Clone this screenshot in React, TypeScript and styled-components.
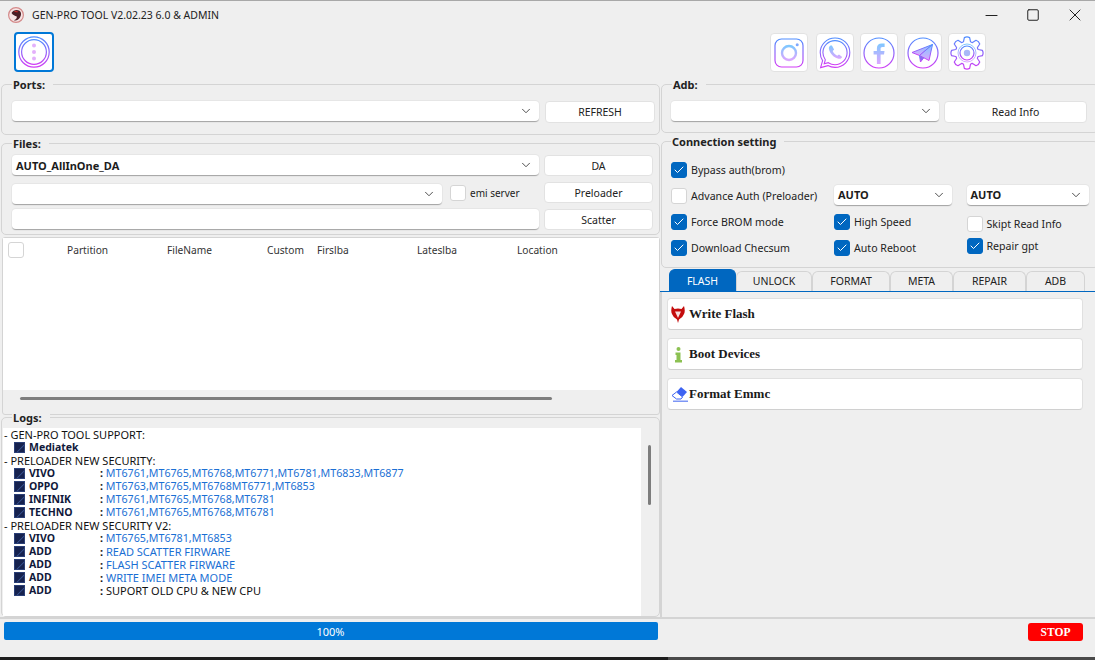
import React from 'react';
import styled, { createGlobalStyle } from 'styled-components';
import { ChevronDown, Check, Minus, Square, X } from 'lucide-react';

const GlobalStyle = createGlobalStyle`
  html, body {
    margin: 0;
    padding: 0;
    background: #efefef;
  }
  * {
    box-sizing: border-box;
  }
`;

const UI_FONT = `"Noto Sans", "Open Sans", sans-serif`;
const SERIF_FONT = `"Liberation Serif", "DejaVu Serif", serif`;

// every drawn icon shares the blue to purple stroke of the original set
const IconGradient = ({ id, light }: { id: string; light?: boolean }) => (
  <defs>
    <linearGradient id={id} x1="0" y1="0" x2="0" y2="1">
      <stop offset="0" stopColor={light ? '#7fc8ff' : '#4d8dff'} />
      <stop offset="1" stopColor={light ? '#dca6ff' : '#d13cf5'} />
    </linearGradient>
  </defs>
);

const MenuIcon = () => (
  <svg width="34" height="34" viewBox="0 0 34 34" fill="none">
    <IconGradient id="menu-stroke" />
    <circle cx="17" cy="17" r="15.2" stroke="url(#menu-stroke)" strokeWidth="1.2" />
    <circle cx="17" cy="17" r="12.4" stroke="url(#menu-stroke)" strokeWidth="1.2" />
    <circle cx="17" cy="10.5" r="2" fill="#e3b0fb" />
    <circle cx="17" cy="17" r="2" fill="#e3b0fb" />
    <circle cx="17" cy="23.5" r="2" fill="#e3b0fb" />
  </svg>
);

const InstagramIcon = () => (
  <svg width="30" height="30" viewBox="0 0 30 30" fill="none">
    <IconGradient id="ig-stroke" />
    <IconGradient id="ig-light" light />
    <rect x="1" y="1" width="28" height="28" rx="6.5" stroke="url(#ig-stroke)" strokeWidth="1.2" />
    <circle cx="15" cy="15" r="7" stroke="url(#ig-light)" strokeWidth="2.4" />
    <circle cx="23.2" cy="6.8" r="1.5" fill="#7fa8ff" />
  </svg>
);

const WhatsappIcon = () => (
  <svg width="32" height="32" viewBox="0 0 32 32" fill="none">
    <IconGradient id="wa-stroke" />
    <IconGradient id="wa-light" light />
    <path d="M16 1C7.800 1 1.200 7.600 1.200 15.600c0 3 .9 5.700 2.400 8L1.600 30.600l7.300-2C11 29.800 13.400 30.400 16 30.400c8.200 0 14.800-6.600 14.800-14.800S24.200 1 16 1z" stroke="url(#wa-stroke)" strokeWidth="1.1" />
    <path d="M16 3.600C9.300 3.600 3.900 9 3.900 15.600c0 2.700.9 5.100 2.400 7.200l-1.100 4 4.100-1.100c2 1.300 4.200 2 6.700 2 6.700 0 12.100-5.400 12.100-12.100S22.700 3.600 16 3.600z" stroke="url(#wa-stroke)" strokeWidth="1.1" />
    <path d="M11.500 8.500c-1.400.8-2 2.300-1.400 4.200 1.200 3.900 4.800 7.800 8.700 8.900 2 .6 3.600-.2 4.400-1.700l-3.200-2.400-1.800 1.300c-2-.9-3.700-2.700-4.500-4.700l1.400-1.700-2.200-3.900z" fill="url(#wa-light)" />
  </svg>
);

const FacebookIcon = () => (
  <svg width="32" height="32" viewBox="0 0 32 32" fill="none">
    <IconGradient id="fb-stroke" />
    <IconGradient id="fb-light" light />
    <circle cx="16" cy="16" r="15" stroke="url(#fb-stroke)" strokeWidth="1.2" />
    <path d="M17.600 27V17.500h3.400l.5-3.600h-3.900v-2.200c0-1.100.4-1.800 1.900-1.800h2.100V6.600c-.8-.1-1.900-.2-2.900-.2-3 0-4.800 1.800-4.800 5v2.500h-3.300v3.600h3.300V27z" fill="url(#fb-light)" />
  </svg>
);

const TelegramIcon = () => (
  <svg width="32" height="32" viewBox="0 0 32 32" fill="none">
    <IconGradient id="tg-stroke" />
    <IconGradient id="tg-light" light />
    <circle cx="16" cy="16" r="15" stroke="url(#tg-stroke)" strokeWidth="1.2" />
    <path d="M5 15.500L25.500 7.500 12.500 18.500z" fill="url(#tg-light)" stroke="url(#tg-stroke)" strokeWidth="1" strokeLinejoin="round" />
    <path d="M25.500 7.500L22 23.500 12.500 18.500z" fill="url(#tg-light)" stroke="url(#tg-stroke)" strokeWidth="1" strokeLinejoin="round" />
    <path d="M12.500 18.500l1 6.500 3.300-4.200" fill="#8a6cf0" stroke="url(#tg-stroke)" strokeWidth="1" strokeLinejoin="round" />
  </svg>
);

// eight rounded teeth around the hub
const gearPath = () => {
  const point = (radius: number, angle: number) =>
    `${(17 + radius * Math.sin(angle)).toFixed(2)} ${(17 - radius * Math.cos(angle)).toFixed(2)}`;
  let d = '';
  for (let i = 0; i < 8; i++) {
    const a = (i * Math.PI) / 4;
    d += `${i === 0 ? 'M' : 'L'}${point(11.8, a - 0.3)} L${point(15.6, a - 0.17)} Q${point(16.8, a)} ${point(15.6, a + 0.17)} L${point(11.8, a + 0.3)} `;
    d += `Q${point(11.2, a + Math.PI / 8)} ${point(11.8, a + Math.PI / 4 - 0.3)} `;
  }
  return `${d}Z`;
};

const GearIcon = () => (
  <svg width="34" height="34" viewBox="0 0 34 34" fill="none">
    <IconGradient id="gear-stroke" />
    <IconGradient id="gear-light" light />
    <path d={gearPath()} stroke="url(#gear-stroke)" strokeWidth="1.2" strokeLinejoin="round" />
    <circle cx="17" cy="17" r="9" stroke="url(#gear-light)" strokeWidth="1" />
    <circle cx="17" cy="17" r="7" stroke="url(#gear-stroke)" strokeWidth="1.2" />
    <circle cx="17" cy="17" r="3.200" fill="#a9b8f8" />
  </svg>
);

const AppLogo = () => (
  <svg width="16" height="16" viewBox="0 0 16 16">
    <circle cx="8" cy="8" r="7.400" fill="#f6e4e4" stroke="#d48a8a" strokeWidth="1.200" />
    <path d="M3.500 6C5 3 9 2 11.500 3.800 13.500 5.300 13.500 8 12 10.500 10.500 13 8 14 6 13.300 8.200 12.500 9.500 10.500 8.500 9.300 7 8.800 5 8.300 3.500 6z" fill="#4a1f26" />
    <path d="M6 4.500c1.500-.8 3.500-.5 4.200.5-1 .3-2.700.5-4.200-.5z" fill="#c62828" />
  </svg>
);

const ShieldIcon = () => (
  <svg width="14" height="17" viewBox="0 0 14 17">
    <path d="M1 0l2.500 3Q7 1.800 10.500 3L13 0q1.500 5 0 8-1.500 4-5 5.500L7 17l-1-3.500Q2.500 12 1 8-.5 5 1 0z" fill="#c40d0d" />
    <path d="M4 5.500h6L7 12z" fill="#f7dede" />
  </svg>
);

const InfoIcon = () => (
  <svg width="15" height="17" viewBox="0 0 15 17">
    <circle cx="7.500" cy="3" r="2" fill="#8cc152" />
    <path d="M4.500 6.500h5V14h1.500v2.500H4V14h1.500V9H4.500z" fill="#8cc152" />
  </svg>
);

const EraserIcon = () => (
  <svg width="17" height="16" viewBox="0 0 17 16">
    <path d="M10 1l6 5-4.500 5-6-5z" fill="#3d63f2" />
    <path d="M5.500 6l6 5-1.500 2H5.500L1 9.500z" fill="#fff" stroke="#3d63f2" strokeWidth="1" />
    <rect x="2" y="14.500" width="15" height="1.500" fill="#7d96f5" />
  </svg>
);

const Window = styled.div`
  width: 1095px;
  height: 660px;
  display: flex;
  flex-direction: column;
  overflow: hidden;
  background: #efefef;
  border-top: 1px solid #a8a8a8;
  font-family: ${UI_FONT};
  font-size: 10.5px;
  color: #1a1a1a;
`;

const TitleBar = styled.div`
  height: 28px;
  flex: none;
  display: flex;
  align-items: center;
  padding-left: 8px;
`;

const Title = styled.div`
  flex: 1;
  margin-left: 8px;
  font-size: 10.5px;
  color: #222;
`;

const WindowButton = styled.div`
  width: 42px;
  height: 28px;
  display: flex;
  align-items: center;
  justify-content: center;
  color: #222;
  &:last-child {
    margin-right: -1px;
  }
`;

const Toolbar = styled.div`
  height: 55px;
  flex: none;
  display: flex;
  align-items: flex-start;
  padding: 3px 109px 0 14px;
`;

const MenuButton = styled.div`
  width: 40px;
  height: 40px;
  display: flex;
  align-items: center;
  justify-content: center;
  background: #fff;
  border: 2px solid #0078d7;
  border-radius: 4px;
`;

const SocialBar = styled.div`
  margin-left: auto;
  display: flex;
  gap: 6px;
  padding-top: 1px;
`;

const SocialButton = styled.div`
  width: 38px;
  height: 39px;
  display: flex;
  align-items: center;
  justify-content: center;
  background: #fff;
  border: 1px solid #e2e2e2;
  border-radius: 4px;
  &:first-child {
    margin-right: 2px;
  }
`;

const Main = styled.div`
  height: 533px;
  flex: none;
  display: grid;
  grid-template-columns: 660px 1fr;
`;

const LeftColumn = styled.div`
  display: flex;
  flex-direction: column;
  padding-left: 1px;
`;

const RightColumn = styled.div`
  display: flex;
  flex-direction: column;
`;

const Group = styled.div<{ $height: number; $top?: number; $pad?: number; $padRight?: number }>`
  height: ${(p) => p.$height}px;
  flex: none;
  margin-top: ${(p) => p.$top ?? 0}px;
  padding: 0 ${(p) => p.$padRight ?? p.$pad ?? 10}px 0 ${(p) => p.$pad ?? 10}px;
  border: 1px solid #d4d4d4;
  border-radius: 5px;
`;

const SideGroup = styled(Group)`
  margin-left: 1px;
`;

const Legend = styled.div<{ $left?: number }>`
  width: fit-content;
  height: 14px;
  margin-top: -7px;
  margin-left: ${(p) => p.$left ?? 0}px;
  padding: 0 8px 0 1px;
  background: #efefef;
  font-size: 11px;
  line-height: 14px;
  font-weight: 700;
  color: #222;
`;

const FormRow = styled.div<{ $top?: number; $gap?: number }>`
  display: flex;
  align-items: center;
  margin-top: ${(p) => p.$top ?? 0}px;
  gap: ${(p) => p.$gap ?? 6}px;
`;

const ComboBox = styled.div<{ $width: number; $bold?: boolean; $shift?: number }>`
  width: ${(p) => p.$width}px;
  height: 21px;
  flex: none;
  margin: ${(p) => p.$shift ?? 0}px 0 ${(p) => -(p.$shift ?? 0)}px;
  display: flex;
  align-items: center;
  justify-content: space-between;
  padding: 0 6px 0 4px;
  background: #fff;
  border-radius: 4px;
  border-bottom: 1px solid #a9a9a9;
  box-shadow: 0 0 0 1px #e6e6e6;
  font-size: 11px;
  font-weight: ${(p) => (p.$bold ? 700 : 400)};
  color: #1c1c1c;
  svg {
    color: #444;
  }
`;

const TextInput = styled.div`
  width: 527px;
  height: 21px;
  flex: none;
  background: #fff;
  border-radius: 4px;
  border-bottom: 1px solid #a9a9a9;
  box-shadow: 0 0 0 1px #e6e6e6;
`;

const PushButton = styled.div<{ $width: number; $height?: number }>`
  width: ${(p) => p.$width}px;
  height: ${(p) => p.$height ?? 22}px;
  flex: none;
  display: flex;
  align-items: center;
  justify-content: center;
  background: #fff;
  border: 1px solid #e2e2e2;
  border-radius: 4px;
  font-size: 10.5px;
  color: #222;
`;

const Box = styled.div<{ $checked?: boolean }>`
  width: 16px;
  height: 16px;
  flex: none;
  display: flex;
  align-items: center;
  justify-content: center;
  border-radius: 3px;
  color: #fff;
  background: ${(p) => (p.$checked ? '#0067c0' : '#fff')};
  border: 1px solid ${(p) => (p.$checked ? '#0067c0' : '#d5d5d5')};
`;

const EmiBox = styled(Box)`
  margin-left: 3px;
`;

const EmiLabel = styled.span`
  margin: 0 auto 0 -1px;
  font-size: 10px;
  white-space: nowrap;
  color: #222;
`;

const TableFrame = styled.div`
  height: 178px;
  flex: none;
  margin: 2px 0 0 1px;
  display: flex;
  flex-direction: column;
  border: 1px solid #d4d4d4;
  border-radius: 3px;
`;

const TableBody = styled.div`
  flex: 1;
  background: #fff;
`;

const TableHeader = styled.div`
  display: grid;
  grid-template-columns: 59px 100px 100px 50px 100px 100px 1fr;
  align-items: center;
  height: 16px;
  margin-top: 4px;
  padding-left: 5px;
  font-size: 10.2px;
  color: #333;
`;

const HScrollArea = styled.div`
  height: 24px;
  flex: none;
  padding: 7px 0 0 17px;
`;

const HThumb = styled.div`
  width: 532px;
  height: 3px;
  border-radius: 2px;
  background: #7d7d7d;
`;

const LogBody = styled.div`
  display: flex;
  height: 188px;
  margin-top: 3px;
`;

const LogList = styled.div`
  width: 638px;
  flex: none;
  background: #fff;
  font-size: 10.5px;
  line-height: 13px;
  color: #111;
  padding-left: 1px;
`;

const VThumb = styled.div`
  width: 3px;
  height: 60px;
  margin: 17px 0 0 7px;
  border-radius: 2px;
  background: #7d7d7d;
`;

const LogHeading = styled.div`
  height: 13px;
  font-size: 11px;
  white-space: nowrap;
`;

const LogRow = styled.div`
  height: 13px;
  display: flex;
  align-items: center;
  padding-left: 10px;
  white-space: nowrap;
`;

const LogMark = styled.span`
  width: 11px;
  height: 11px;
  flex: none;
  margin-right: 4px;
  border: 1px solid #2a3f77;
  background: linear-gradient(135deg, #16224f 55%, #34508e 60%, #16224f 70%);
`;

const LogName = styled.span`
  width: 71px;
  flex: none;
  font-weight: 700;
  color: #10183a;
`;

const LogValue = styled.span<{ $plain?: boolean; $size: number }>`
  font-size: ${(p) => p.$size}px;
  color: ${(p) => (p.$plain ? '#111' : '#1a6fd4')};
  &::before {
    content: ': ';
    font-weight: 700;
    color: #111;
  }
`;

const SettingsGrid = styled.div`
  display: grid;
  grid-template-columns: 163px 132.5px 122px;
  grid-auto-rows: 26px;
  margin-top: 8px;
  align-items: center;
`;

const CheckRow = styled.div<{ $shift?: number }>`
  display: flex;
  align-items: center;
  gap: 4px;
  margin-top: ${(p) => p.$shift ?? 0}px;
  font-size: 10.6px;
  white-space: nowrap;
  color: #222;
`;

const TabRow = styled.div`
  height: 23px;
  flex: none;
  margin-top: 1px;
  display: flex;
  align-items: flex-end;
  padding-left: 9px;
  border-bottom: 1px solid #0067c0;
`;

const Tab = styled.div<{ $width: number; $active?: boolean }>`
  width: ${(p) => p.$width}px;
  height: ${(p) => (p.$active ? 22 : 20)}px;
  display: flex;
  align-items: center;
  justify-content: center;
  padding-bottom: ${(p) => (p.$active ? 0 : 2)}px;
  border-radius: 6px 6px 0 0;
  font-size: 10.5px;
  color: ${(p) => (p.$active ? '#fff' : '#222')};
  background: ${(p) => (p.$active ? '#0067c0' : '#efefef')};
  border: 1px solid ${(p) => (p.$active ? '#0067c0' : '#d4d4d4')};
  border-bottom: none;
`;

const TabPanel = styled.div`
  flex: 1;
  display: flex;
  flex-direction: column;
  gap: 8px;
  padding: 6px 0 0 5px;
  border-left: 2px solid #d4d4d4;
`;

const ActionButton = styled.div`
  width: 416px;
  height: 32px;
  flex: none;
  display: flex;
  align-items: center;
  padding-left: 3px;
  background: #fff;
  border: 1px solid #e0e0e0;
  border-bottom-color: #d0d0d0;
  border-radius: 4px;
`;

const ActionIcon = styled.span`
  width: 18px;
  flex: none;
  display: flex;
  align-items: center;
`;

const ActionLabel = styled.span`
  font-family: ${SERIF_FONT};
  font-size: 13px;
  font-weight: 700;
  color: #1a1a1a;
`;

const BottomBar = styled.div`
  flex: 1;
  display: flex;
  align-items: flex-start;
  justify-content: space-between;
  padding: 3px 12px 0 4px;
  border-top: 2px solid #d4d4d4;
`;

const ProgressTrack = styled.div`
  width: 654px;
  height: 18px;
  border-radius: 2px;
  background: #e0e0e0;
  overflow: hidden;
`;

const ProgressFill = styled.div`
  height: 100%;
  display: flex;
  align-items: center;
  justify-content: center;
  padding-right: 1px;
  background: #0078d7;
  color: #fff;
  font-size: 11px;
`;

const StopButton = styled.div`
  width: 55px;
  height: 18px;
  margin-top: 1px;
  display: flex;
  align-items: center;
  justify-content: center;
  padding-bottom: 1px;
  border-radius: 3px;
  background: #ff0000;
  color: #fff;
  font-family: ${SERIF_FONT};
  font-size: 11.5px;
  font-weight: 700;
`;

const DesktopEdge = styled.div`
  height: 3px;
  flex: none;
  background: linear-gradient(90deg, #1d1d1d 61%, #4a4a4a 61%);
`;

const securityRows = [
  { name: 'VIVO', value: 'MT6761,MT6765,MT6768,MT6771,MT6781,MT6833,MT6877' },
  { name: 'OPPO', value: 'MT6763,MT6765,MT6768MT6771,MT6853' },
  { name: 'INFINIK', value: 'MT6761,MT6765,MT6768,MT6781' },
  { name: 'TECHNO', value: 'MT6761,MT6765,MT6768,MT6781' },
];

const securityV2Rows = [
  { name: 'VIVO', value: 'MT6765,MT6781,MT6853', size: 10.7 },
  { name: 'ADD', value: 'READ SCATTER FIRWARE', size: 11 },
  { name: 'ADD', value: 'FLASH SCATTER FIRWARE', size: 11 },
  { name: 'ADD', value: 'WRITE IMEI META MODE', size: 11 },
  { name: 'ADD', value: 'SUPORT OLD CPU & NEW CPU', size: 11, plain: true },
];

const tabs = [
  { label: 'FLASH', width: 67, active: true },
  { label: 'UNLOCK', width: 76 },
  { label: 'FORMAT', width: 78 },
  { label: 'META', width: 63 },
  { label: 'REPAIR', width: 73 },
  { label: 'ADB', width: 59 },
];

const columns = ['Partition', 'FileName', 'Custom', 'Firslba', 'Lateslba', 'Location'];

const CheckItem = ({ label, checked, shift }: { label: string; checked?: boolean; shift?: number }) => (
  <CheckRow $shift={shift}>
    <Box $checked={checked}>{checked && <Check size={12} strokeWidth={2} />}</Box>
    {label}
  </CheckRow>
);

const Combo = ({
  width,
  bold,
  shift,
  children,
}: {
  width: number;
  bold?: boolean;
  shift?: number;
  children?: React.ReactNode;
}) => (
  <ComboBox $width={width} $bold={bold} $shift={shift}>
    <span>{children}</span>
    <ChevronDown size={14} strokeWidth={1.6} />
  </ComboBox>
);

const App: React.FC = () => {
  return (
    <>
      <GlobalStyle />
      <Window>
        <TitleBar>
          <AppLogo />
          <Title>GEN-PRO TOOL V2.02.23 6.0 &amp; ADMIN</Title>
          <WindowButton><Minus size={19} strokeWidth={1.3} /></WindowButton>
          <WindowButton><Square size={14} strokeWidth={1.7} /></WindowButton>
          <WindowButton><X size={20} strokeWidth={1.2} /></WindowButton>
        </TitleBar>
        <Toolbar>
          <MenuButton><MenuIcon /></MenuButton>
          <SocialBar>
            <SocialButton><InstagramIcon /></SocialButton>
            <SocialButton><WhatsappIcon /></SocialButton>
            <SocialButton><FacebookIcon /></SocialButton>
            <SocialButton><TelegramIcon /></SocialButton>
            <SocialButton><GearIcon /></SocialButton>
          </SocialBar>
        </Toolbar>
        <Main>
          <LeftColumn>
            <Group $height={51} $padRight={4}>
              <Legend>Ports:</Legend>
              <FormRow $top={9}>
                <Combo width={527} shift={-1} />
                <PushButton $width={110}>REFRESH</PushButton>
              </FormRow>
            </Group>
            <Group $height={92} $top={8} $padRight={6}>
              <Legend>Files:</Legend>
              <FormRow $top={4} $gap={5}>
                <Combo width={527} bold>AUTO_AllInOne_DA</Combo>
                <PushButton $width={109} $height={21}>DA</PushButton>
              </FormRow>
              <FormRow $top={6} $gap={5}>
                <Combo width={430} shift={2} />
                <EmiBox />
                <EmiLabel>emi server</EmiLabel>
                <PushButton $width={109} $height={21}>Preloader</PushButton>
              </FormRow>
              <FormRow $top={6} $gap={5}>
                <TextInput />
                <PushButton $width={109} $height={21}>Scatter</PushButton>
              </FormRow>
            </Group>
            <TableFrame>
              <TableBody>
                <TableHeader>
                  <Box />
                  {columns.map((column) => (
                    <span key={column}>{column}</span>
                  ))}
                </TableHeader>
              </TableBody>
              <HScrollArea><HThumb /></HScrollArea>
            </TableFrame>
            <Group $height={200} $top={2} $pad={1}>
              <Legend $left={9}>Logs:</Legend>
              <LogBody>
                <LogList>
                  <LogHeading>- GEN-PRO TOOL SUPPORT:</LogHeading>
                  <LogRow><LogMark /><LogName>Mediatek</LogName></LogRow>
                  <LogHeading>- PRELOADER NEW SECURITY:</LogHeading>
                  {securityRows.map((row) => (
                    <LogRow key={row.name}>
                      <LogMark />
                      <LogName>{row.name}</LogName>
                      <LogValue $size={10.7}>{row.value}</LogValue>
                    </LogRow>
                  ))}
                  <LogHeading>- PRELOADER NEW SECURITY V2:</LogHeading>
                  {securityV2Rows.map((row) => (
                    <LogRow key={row.value}>
                      <LogMark />
                      <LogName>{row.name}</LogName>
                      <LogValue $plain={row.plain} $size={row.size}>{row.value}</LogValue>
                    </LogRow>
                  ))}
                </LogList>
                <VThumb />
              </LogBody>
            </Group>
          </LeftColumn>
          <RightColumn>
            <SideGroup $height={49} $pad={9}>
              <Legend $left={1}>Adb:</Legend>
              <FormRow $top={9} $gap={5}>
                <Combo width={268} shift={-1} />
                <PushButton $width={143}>Read Info</PushButton>
              </FormRow>
            </SideGroup>
            <SideGroup $height={127} $top={8} $pad={9}>
              <Legend>Connection setting</Legend>
              <SettingsGrid>
                <CheckItem label="Bypass auth(brom)" checked />
                <span />
                <span />
                <CheckItem label="Advance Auth (Preloader)" />
                <Combo width={118} bold shift={-1}>AUTO</Combo>
                <Combo width={122} bold shift={-1}>AUTO</Combo>
                <CheckItem label="Force BROM mode" checked />
                <CheckItem label="High Speed" checked />
                <CheckItem label="Skipt Read Info" shift={4} />
                <CheckItem label="Download Checsum" checked />
                <CheckItem label="Auto Reboot" checked />
                <CheckItem label="Repair gpt" checked shift={-4} />
              </SettingsGrid>
            </SideGroup>
            <TabRow>
              {tabs.map((tab) => (
                <Tab key={tab.label} $width={tab.width} $active={tab.active}>{tab.label}</Tab>
              ))}
            </TabRow>
            <TabPanel>
              <ActionButton>
                <ActionIcon><ShieldIcon /></ActionIcon>
                <ActionLabel>Write Flash</ActionLabel>
              </ActionButton>
              <ActionButton>
                <ActionIcon><InfoIcon /></ActionIcon>
                <ActionLabel>Boot Devices</ActionLabel>
              </ActionButton>
              <ActionButton>
                <ActionIcon><EraserIcon /></ActionIcon>
                <ActionLabel>Format Emmc</ActionLabel>
              </ActionButton>
            </TabPanel>
          </RightColumn>
        </Main>
        <BottomBar>
          <ProgressTrack>
            <ProgressFill style={{ width: '100%' }}>100%</ProgressFill>
          </ProgressTrack>
          <StopButton>STOP</StopButton>
        </BottomBar>
        <DesktopEdge />
      </Window>
    </>
  );
};

export default App;
